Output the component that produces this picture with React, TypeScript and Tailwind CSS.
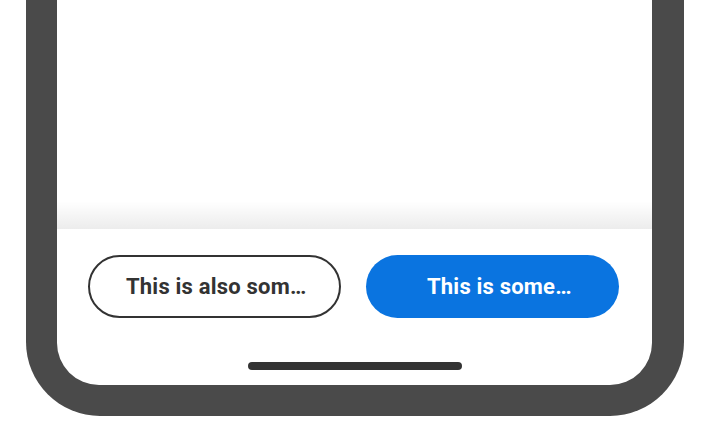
import React from "react";

export default function App() {
  return (
    <div className="w-[708px] h-[440px] bg-white overflow-hidden" style={{ fontFamily: "Roboto, 'Liberation Sans', sans-serif" }}>
      <div className="ml-[26px] w-[658px] h-[416px] bg-[#4a4a4a] rounded-b-[74px] pl-[31px] pr-[32px] pb-[31px]">
        <div className="h-full bg-white rounded-b-[42px] flex flex-col overflow-hidden">
          <div className="flex-1 flex flex-col justify-end">
            <div className="h-[28px] bg-gradient-to-b from-[rgba(0,0,0,0)] to-[rgba(0,0,0,0.075)]" />
          </div>
          <div className="h-[156px] flex flex-col items-center pt-[26px]">
            <div className="w-full flex gap-[25px] pl-[31px] pr-[33px]">
              <button className="w-[253px] shrink-0 h-[63px] rounded-full border-2 border-[#333333] bg-white text-[#333333] text-[22px] tracking-[0.2px] font-bold text-left pl-[36px] whitespace-nowrap overflow-hidden">
                This is also som…
              </button>
              <button className="w-[253px] shrink-0 h-[63px] rounded-full bg-[#0a74e0] text-white text-[22px] tracking-[0.2px] font-bold text-left pl-[61px] whitespace-nowrap overflow-hidden">
                This is some…
              </button>
            </div>
            <div className="mt-[44px] w-[214px] h-[8px] rounded-full bg-[#333333]" />
          </div>
        </div>
      </div>
    </div>
  );
}
